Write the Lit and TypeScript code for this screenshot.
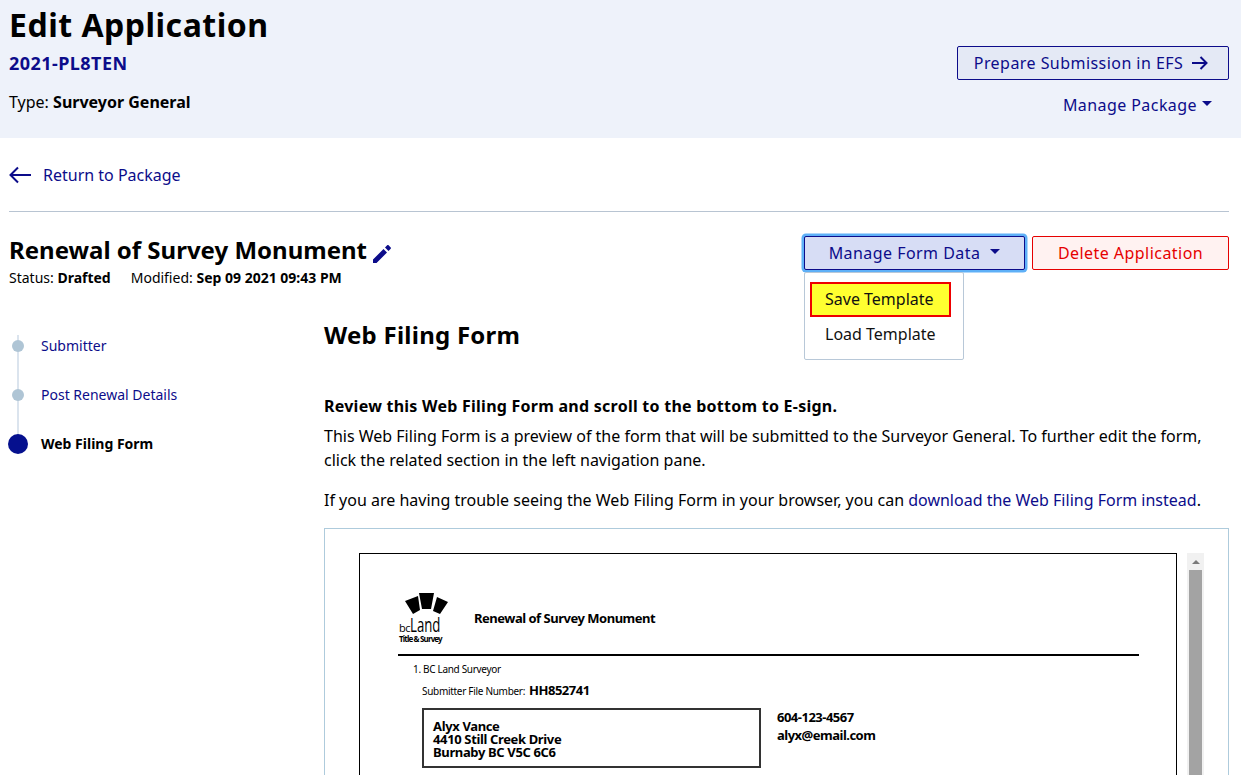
import { LitElement, html, css } from "lit";
import { customElement } from "lit/decorators.js";

@customElement("app-root")
export class AppRoot extends LitElement {
  static styles = css`
    :host { display: block; height: 775px; overflow: hidden; background: #fff; font-family: "Noto Sans", sans-serif; color: #000; font-size: 16px; }
    * { box-sizing: border-box; }
    a { color: #0c0c8a; text-decoration: none; }
    .header { height: 138px; background: #eef2fa; padding: 0 12px 0 9px; display: flex; justify-content: space-between; }
    h1 { margin: 0; font-size: 32px; line-height: 50px; font-weight: 700; letter-spacing: 0.5px; }
    .pkg { font-size: 18px; font-weight: 700; color: #0c0c8a; line-height: 26px; letter-spacing: 0.45px; }
    .type { font-size: 16px; line-height: 24px; margin-top: 14px; }
    .head-right { display: flex; flex-direction: column; align-items: flex-end; padding-top: 46px; }
    .btn { display: flex; align-items: center; justify-content: center; height: 34px; border-radius: 2px; font-size: 16px; letter-spacing: 0.45px; }
    .efs { width: 272px; border: 1px solid #0c0c8a; background: #e4e9f5; color: #0c0c8a; gap: 9px; padding-right: 4px; }
    .manage { display: flex; align-items: center; gap: 5px; margin-top: 13px; margin-right: 17px; color: #0c0c8a; line-height: 24px; letter-spacing: 0.43px; }
    .caret { width: 0; height: 0; border-left: 5px solid transparent; border-right: 5px solid transparent; border-top: 5px solid #0c0c8a; margin-top: -3px; }
    .main { padding: 0 12px 0 9px; }
    .back { display: flex; align-items: center; height: 74px; padding-top: 1px; gap: 12px; border-bottom: 1px solid #b8c4d2; }
    .title-row { display: flex; justify-content: space-between; height: 109px; padding-top: 24px; }
    h2 { margin: 0; font-size: 24px; line-height: 28px; font-weight: 700; display: flex; align-items: center; gap: 5px; }
    h2 svg { margin-top: 8px; }
    .meta { display: flex; gap: 20px; font-size: 14px; line-height: 20px; margin-top: 4px; }
    .actions { display: flex; gap: 7px; position: relative; }
    .mfd { width: 221px; border: 1px solid #0c0c8a; background: #d7ddf5; color: #0c0c8a; gap: 10px; box-shadow: 0 0 0 2.5px #5eb0f7; }
    .del { width: 197px; border: 1px solid #e60000; background: #fff2f1; color: #e60000; }
    .menu { position: absolute; top: 36px; left: 0; width: 160px; height: 88px; background: #fff; border: 1px solid #b8c8d8; border-radius: 2px; padding: 9px 5px; }
    .item { height: 35px; line-height: 34px; padding-left: 15px; font-size: 16px; color: #111; }
    .item.hl { background: #ffff30; border: 2px solid #ee0000; padding-left: 13px; line-height: 31px; width: 141px; }
    .body { display: grid; grid-template-columns: 315px 1fr; }
    .steps { position: relative; }
    .steps .line { position: absolute; left: 8px; top: 14px; width: 2px; height: 100px; background: #dbe4ee; }
    .step { position: relative; display: flex; align-items: center; height: 49px; font-size: 14px; gap: 14px; }
    .dot { width: 12px; height: 12px; border-radius: 50%; background: #afc5d5; margin-left: 3px; margin-right: 3px; flex: none; }
    .step.on { font-weight: 700; gap: 13px; }
    .step.on .dot { width: 20px; height: 20px; background: #05108e; margin: 0 0 0 -1px; }
    .content { margin-top: -2px; }
    h3 { margin: 0; font-size: 24px; line-height: 32px; font-weight: 700; letter-spacing: 0.25px; }
    .lead { font-weight: 700; font-size: 16px; line-height: 24px; margin-top: 43px; letter-spacing: 0.25px; }
    p { margin: 0; font-size: 16px; line-height: 24px; }
    .p1 { margin-top: 7px; line-height: 23.5px; }
    .p2 { margin-top: 16px; }
    .frame { margin-top: 16px; height: 300px; border: 1px solid #aecbdc; padding: 24px 24px 0 34px; display: flex; gap: 10px; }
    .sheet { width: 818px; flex: none; height: 400px; border: 1px solid #000; border-bottom: none; padding: 38px 37px 0 38px; }
    .doc-top { display: flex; gap: 26px; height: 64px; border-bottom: 2px solid #000; }
    .logo { width: 50px; flex: none; }
    .logo svg { display: block; }
    .land { display: flex; align-items: baseline; height: 18px; line-height: 18px; font-family: "Open Sans", sans-serif; white-space: nowrap; margin-top: 1px; padding-left: 1px; }
    .land .bc { font-size: 11px; width: 14px; letter-spacing: -0.5px; }
    .land .big { font-size: 20px; display: inline-block; transform: scaleX(0.66); transform-origin: left; }
    .tas { font-size: 8px; line-height: 10px; font-weight: 700; letter-spacing: -0.85px; white-space: nowrap; padding-left: 1px; }
    .doc-title { font-size: 13px; line-height: 18px; font-weight: 700; letter-spacing: -0.49px; margin-top: 17px; }
    .l1 { font-size: 10px; letter-spacing: -0.32px; margin: 5px 0 0 15px; line-height: 16px; }
    .l2 { display: flex; align-items: baseline; gap: 4px; font-size: 10px; letter-spacing: -0.3px; margin: 4px 0 0 24px; line-height: 18px; }
    .l2 b { font-size: 13px; letter-spacing: -0.5px; }
    .addr-row { display: flex; gap: 16px; margin: 8px 0 0 24px; }
    .addr { width: 339px; height: 60px; border: 2px solid #333; padding: 10px 0 0 9px; font-size: 13px; line-height: 13px; font-weight: 700; letter-spacing: -0.36px; }
    .contact { font-size: 13px; line-height: 18px; font-weight: 700; letter-spacing: -0.5px; }
    .sb { width: 17px; background: #f1f1f1; height: 300px; padding: 0 2px; flex: none; }
    .sb-up { height: 17px; display: flex; align-items: center; justify-content: center; }
    .sb-up i { width: 0; height: 0; border-left: 4px solid transparent; border-right: 4px solid transparent; border-bottom: 4px solid #7a7a7a; }
    .sb-th { height: 280px; background: #a3a3a3; }
  `;

  render() {
    return html`
      <div class="header">
        <div>
          <h1>Edit Application</h1>
          <div class="pkg">2021-PL8TEN</div>
          <div class="type">Type: <b>Surveyor General</b></div>
        </div>
        <div class="head-right">
          <a class="btn efs">Prepare Submission in EFS
            <svg width="16" height="14" viewBox="0 0 16 14" fill="none" stroke="#0c0c8a" stroke-width="2"><path d="M0 7h14.5M8.5 1l6 6-6 6"/></svg>
          </a>
          <a class="manage">Manage Package <span class="caret"></span></a>
        </div>
      </div>
      <div class="main">
        <div class="back">
          <svg width="22" height="18" viewBox="0 0 22 18" fill="none" stroke="#0c0c8a" stroke-width="2"><path d="M22 9H1.5M9 1.5L1.5 9 9 16.5"/></svg>
          <a>Return to Package</a>
        </div>
        <div class="title-row">
          <div>
            <h2>Renewal of Survey Monument
              <svg width="20" height="20" viewBox="0 0 20 20" fill="#0c0c8a"><path d="M1 15.5V19h3.5L15 8.5 11.5 5zM18.7 4.8c.4-.4.4-1 0-1.4l-2.1-2.1c-.4-.4-1-.4-1.4 0L13 3.5 16.5 7z"/></svg>
            </h2>
            <div class="meta"><span>Status: <b>Drafted</b></span><span>Modified: <b>Sep 09 2021 09:43 PM</b></span></div>
          </div>
          <div class="actions">
            <a class="btn mfd">Manage Form Data <span class="caret"></span></a>
            <a class="btn del">Delete Application</a>
            <div class="menu">
              <div class="item hl">Save Template</div>
              <div class="item">Load Template</div>
            </div>
          </div>
        </div>
        <div class="body">
          <div class="steps">
            <div class="line"></div>
            <div class="step"><span class="dot"></span><a>Submitter</a></div>
            <div class="step"><span class="dot"></span><a>Post Renewal Details</a></div>
            <div class="step on"><span class="dot"></span><span>Web Filing Form</span></div>
          </div>
          <div class="content">
            <h3>Web Filing Form</h3>
            <div class="lead">Review this Web Filing Form and scroll to the bottom to E-sign.</div>
            <p class="p1">This Web Filing Form is a preview of the form that will be submitted to the Surveyor General. To further edit the form, click the related section in the left navigation pane.</p>
            <p class="p2">If you are having trouble seeing the Web Filing Form in your browser, you can <a>download the Web Filing Form instead</a>.</p>
            <div class="frame">
              <div class="sheet">
                <div class="doc-top">
                  <div class="logo">
                    <svg width="50" height="23" viewBox="0 0 50 23" fill="#000"><path d="M7 9L20 4 22 18 15 22zM21 1H36L33 17H24zM39 5L50 10 42 22 35 19z"/></svg>
                    <div class="land"><span class="bc">bc</span><span class="big">Land</span></div>
                    <div class="tas">Title &amp; Survey</div>
                  </div>
                  <div class="doc-title">Renewal of Survey Monument</div>
                </div>
                <div class="l1">1. BC Land Surveyor</div>
                <div class="l2"><span>Submitter File Number:</span><b>HH852741</b></div>
                <div class="addr-row">
                  <div class="addr">Alyx Vance<br>4410 Still Creek Drive<br>Burnaby BC V5C 6C6</div>
                  <div class="contact">604-123-4567<br>alyx@email.com</div>
                </div>
              </div>
              <div class="sb"><div class="sb-up"><i></i></div><div class="sb-th"></div></div>
            </div>
          </div>
        </div>
      </div>
    `;
  }
}
